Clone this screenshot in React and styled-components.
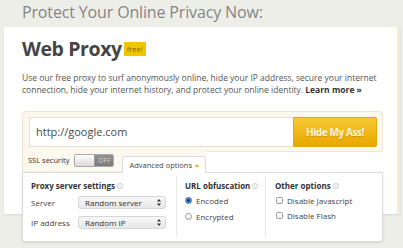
import React from 'react';
import styled, { createGlobalStyle } from 'styled-components';

const GlobalStyle = createGlobalStyle`
  html, body { margin: 0; padding: 0; }
  body {
    background: #eeeee9;
    font-family: "Open Sans", "DejaVu Sans", sans-serif;
    width: 403px; height: 248px; overflow: hidden;
  }
`;

const Page = styled.div`
  width: 403px; height: 248px; box-sizing: border-box;
  padding: 0 3px 0 4px;
`;

const Heading = styled.h1`
  margin: 0; height: 27px; box-sizing: border-box; padding-left: 18px;
  font-size: 16px; font-weight: 400; line-height: 24px; color: #858585;
  letter-spacing: -0.15px; white-space: nowrap;
`;

const Card = styled.section`
  background: #fff; height: 187px; box-sizing: border-box;
  padding: 10px 14px 0 18px;
  border-right: 3px solid #f4edd3;
  box-shadow: 0 1px 2px rgba(0,0,0,0.10);
`;

const TitleRow = styled.div`
  display: flex; align-items: flex-start; gap: 2px;
`;

const Title = styled.h2`
  margin: 0; font-size: 19.5px; font-weight: 700; line-height: 24px; color: #454545;
  letter-spacing: -0.4px;
`;

const Badge = styled.span`
  margin-top: 5px; height: 14px; line-height: 14px; padding: 0 3px;
  background: #f2c500; color: #8a5a00; font-size: 7.5px;
`;

const Intro = styled.p`
  margin: 10.5px 0 0; font-size: 8.5px; line-height: 12px; color: #555;
  white-space: nowrap;
`;

const LearnMore = styled.strong`
  color: #333; font-weight: 700;
`;

const Form = styled.form`
  margin: 15px 0 0; display: flex; flex-direction: column;
`;

const CreamBox = styled.div`
  display: flex; background: #fbf8ef; border: 1px solid #ece5cf;
  border-radius: 4px 4px 3px 0; padding: 5px 5px 4px 6px;
`;

const UrlInput = styled.input`
  flex: 1; min-width: 0; height: 30px; box-sizing: border-box; margin: 0;
  border: 1px solid #e6e0cb; border-right: none; background: #fff;
  padding: 0 6px; font-family: "Open Sans", sans-serif; font-size: 11px; color: #4a4a4a;
  outline: none;
`;

const GoButton = styled.button`
  width: 84px; height: 30px; box-sizing: border-box; margin: 0;
  border: 1px solid #e2a900; border-radius: 0 2px 2px 0;
  background: linear-gradient(#f7c933, #e8a700);
  color: #fff7da; font-family: "Open Sans", sans-serif; font-size: 10px; font-weight: 700;
  letter-spacing: -0.4px; text-shadow: 0 1px 0 rgba(170,110,0,0.45);
  padding: 0;
`;

const ToolRow = styled.div`
  display: flex; align-items: flex-start; width: fit-content;
  height: 21px; box-sizing: border-box; margin-top: -1px;
  padding: 3px 0 0 5px; background: #fbf8ef; border-left: 1px solid #ece5cf;
`;

const SslLabel = styled.span`
  font-size: 7.5px; line-height: 13px; color: #333; margin-right: 5px;
`;

const Toggle = styled.span`
  display: flex; height: 13px; width: 40px; box-sizing: border-box;
  border: 1px solid #aaa; border-radius: 2px; overflow: hidden;
`;

const ToggleKnob = styled.span`
  width: 19px; background: linear-gradient(#fdfdfd, #dadada);
  border-right: 1px solid #999;
`;

const ToggleState = styled.span`
  flex: 1; background: linear-gradient(#929292, #7b7b7b); color: #d4d4d4;
  font-size: 6.5px; line-height: 11px; text-align: center; letter-spacing: 0.2px;
`;

const Tab = styled.span`
  position: relative; z-index: 1;
  align-self: flex-end; margin: 0 0 -1px 8px; height: 17px; box-sizing: border-box;
  display: flex; align-items: center; gap: 3px; padding: 0 6px 0 6px;
  background: #fff; border: 1px solid #dcdcdc; border-bottom: none;
  border-radius: 3px 3px 0 0;
  font-size: 7.5px; color: #444;
`;

const Caret = styled.span`
  width: 0; height: 0; margin-top: 1px;
  border-left: 2.5px solid transparent; border-right: 2.5px solid transparent;
  border-bottom: 3px solid #e6af00;
`;

const Panel = styled.div`
  height: 70px; box-sizing: border-box; padding: 3px 0 4px;
  background: #fff; border: 1px solid #dadada; border-radius: 0 0 3px 3px;
  box-shadow: 0 1px 3px rgba(0,0,0,0.10);
  display: grid; grid-template-columns: 153px 89px 1fr;
`;

const Column = styled.div`
  display: flex; flex-direction: column; padding: 4px 0 0 ${p => p.$pad}px;
  border-left: ${p => (p.$divider ? '1px solid #e8e8e8' : 'none')};
`;

const ColHeading = styled.div`
  display: flex; align-items: center; gap: 2px;
  font-size: 8px; font-weight: 700; line-height: 12px; color: #333;
  margin-bottom: ${p => p.$gap}px;
`;

const FieldRow = styled.div`
  display: flex; align-items: center; height: ${p => p.$h}px;
  margin-bottom: ${p => p.$gap}px;
  font-size: 8px; color: #444;
`;

const FieldLabel = styled.span`
  width: 47px;
`;

const SelectBox = styled.span`
  width: 88px; height: 13px; box-sizing: border-box; display: flex; align-items: center;
  justify-content: space-between; padding: 0 4px 0 6px;
  background: linear-gradient(#f8f8f8, #e7e7e7); border: 1px solid #d6d6d6; border-radius: 3px;
  font-size: 8px; color: #333;
`;

const Radio = styled.span`
  width: 7px; height: 7px; box-sizing: border-box; border-radius: 50%; margin-right: 4px;
  border: 1px solid ${p => (p.$on ? '#3d6eb4' : '#9a9a9a')};
  background: ${p => (p.$on
    ? 'radial-gradient(circle, #1d3561 0 1.2px, #5d9be6 1.6px, #3b78d0 100%)'
    : 'linear-gradient(#fff, #ececec)')};
`;

const Check = styled.span`
  width: 7px; height: 7px; box-sizing: border-box; border-radius: 1.5px; margin: 0 4px 0 1px;
  border: 1px solid #9a9a9a; background: linear-gradient(#fff, #ececec);
`;

const InfoIcon = () => (
  <svg width="6" height="6" viewBox="0 0 12 12" aria-hidden="true">
    <circle cx="6" cy="6" r="5.2" fill="none" stroke="#bdbdbd" strokeWidth="1.4" />
    <rect x="5.3" y="5" width="1.4" height="4" fill="#bdbdbd" />
    <rect x="5.3" y="2.6" width="1.4" height="1.4" fill="#bdbdbd" />
  </svg>
);

const Arrows = () => (
  <svg width="4" height="7" viewBox="0 0 4 7" aria-hidden="true">
    <path d="M2 0 L4 2.6 L0 2.6 Z" fill="#333" />
    <path d="M2 7 L4 4.4 L0 4.4 Z" fill="#333" />
  </svg>
);

export default function App() {
  return (
    <Page>
      <GlobalStyle />
      <Heading>Protect Your Online Privacy Now:</Heading>
      <Card>
        <TitleRow>
          <Title>Web Proxy</Title>
          <Badge>free!</Badge>
        </TitleRow>
        <Intro>
          Use our free proxy to surf anonymously online, hide your IP address, secure your internet
          <br />
          connection, hide your internet history, and protect your online identity.{' '}
          <LearnMore>Learn more »</LearnMore>
        </Intro>
        <Form onSubmit={e => e.preventDefault()}>
          <CreamBox>
            <UrlInput defaultValue="http://google.com" />
            <GoButton type="submit">Hide My Ass!</GoButton>
          </CreamBox>
          <ToolRow>
            <SslLabel>SSL security</SslLabel>
            <Toggle>
              <ToggleKnob />
              <ToggleState>OFF</ToggleState>
            </Toggle>
            <Tab>
              Advanced options
              <Caret />
            </Tab>
          </ToolRow>
          <Panel>
            <Column $pad={8}>
              <ColHeading $gap={4}>Proxy server settings <InfoIcon /></ColHeading>
              <FieldRow $h={13} $gap={7}>
                <FieldLabel>Server</FieldLabel>
                <SelectBox>Random server <Arrows /></SelectBox>
              </FieldRow>
              <FieldRow $h={13} $gap={0}>
                <FieldLabel>IP address</FieldLabel>
                <SelectBox>Random IP <Arrows /></SelectBox>
              </FieldRow>
            </Column>
            <Column $pad={8} $divider>
              <ColHeading $gap={2}>URL obfuscation <InfoIcon /></ColHeading>
              <FieldRow $h={14} $gap={2}><Radio $on />Encoded</FieldRow>
              <FieldRow $h={14} $gap={0}><Radio />Encrypted</FieldRow>
            </Column>
            <Column $pad={9} $divider>
              <ColHeading $gap={2}>Other options <InfoIcon /></ColHeading>
              <FieldRow $h={14} $gap={1}><Check />Disable Javascript</FieldRow>
              <FieldRow $h={14} $gap={0}><Check />Disable Flash</FieldRow>
            </Column>
          </Panel>
        </Form>
      </Card>
    </Page>
  );
}
